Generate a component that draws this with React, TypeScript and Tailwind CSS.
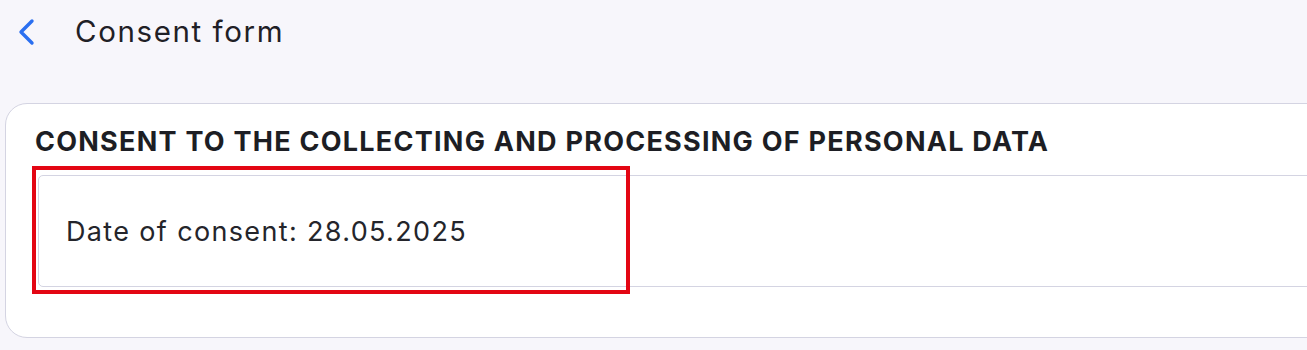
import React from "react"

export default function App() {
  return (
    <div className="min-h-[350px] w-full bg-[#f7f6fb] overflow-hidden font-['Inter',sans-serif]">
      <div className="flex items-center h-[63px] pl-[14px]">
        <button className="w-[26px] h-[28px] flex items-center justify-center text-[#2b6ff0]">
          <svg width="22" height="28" viewBox="0 0 22 28" fill="none">
            <path d="M16 3 L5 14 L16 25" stroke="currentColor" strokeWidth="3.4" strokeLinecap="round" strokeLinejoin="round" />
          </svg>
        </button>
        <h1 className="ml-[35px] text-[29.5px] text-[#1f2026] tracking-[1.6px]">Consent form</h1>
      </div>

      <div className="mt-[40px] ml-[5px] w-[1340px] h-[235px] bg-white border border-[#d4d4e2] rounded-[22px] pt-[20px]">
        <h2 className="pl-[29px] text-[27px] font-bold text-[#1d1e24] leading-[36px] tracking-[1.25px] whitespace-nowrap">
          CONSENT TO THE COLLECTING AND PROCESSING OF PERSONAL DATA
        </h2>
        <div className="relative mt-[15px] ml-[30px]">
          <div className="h-[112px] ml-[2px] border border-[#d4d4e2] rounded-l-[5px] flex items-center pl-[27px]">
            <span className="text-[27px] text-[#24252b] tracking-[1.35px] pt-[3px]">Date of consent: 28.05.2025</span>
          </div>
          <div className="absolute left-[-4px] top-[-9px] w-[598px] h-[128px] border-[4px] border-[#e30613]" />
        </div>
      </div>
    </div>
  )
}
